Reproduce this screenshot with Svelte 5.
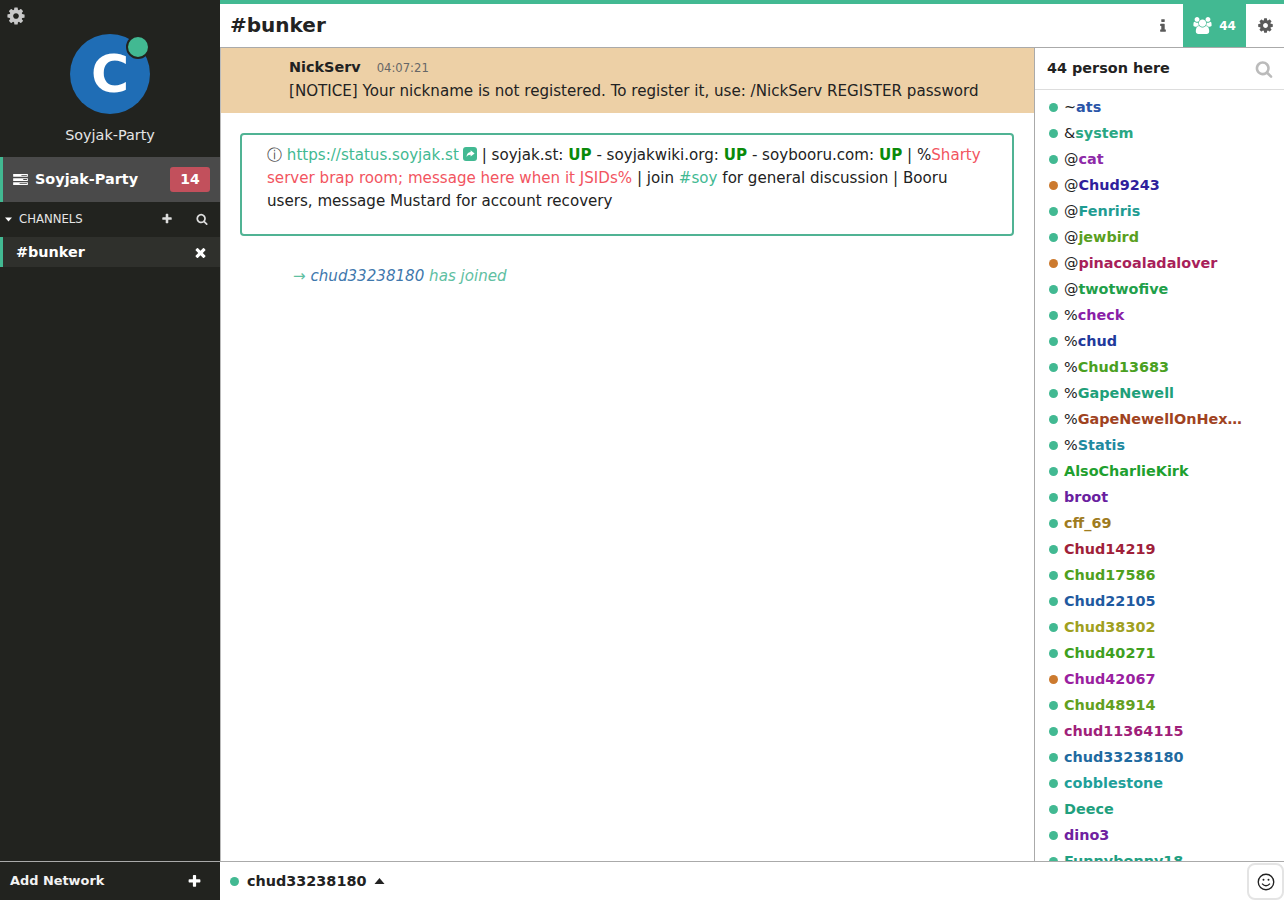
<script>
	const cog = 'M1152 896q0-106-75-181t-181-75-181 75-75 181 75 181 181 75 181-75 75-181zm512-109v222q0 12-8 23t-20 13l-185 28q-19 54-39 91 35 50 107 138 10 12 10 25t-9 23q-27 37-99 108t-94 71q-12 0-26-9l-138-108q-44 23-91 38-16 136-29 186-7 28-36 28h-222q-14 0-24.5-8.5t-11.5-21.5l-28-184q-49-16-90-37l-141 107q-10 9-25 9-14 0-25-11-126-114-165-168-7-10-7-23 0-12 8-23 15-21 51-66.5t54-70.5q-27-50-41-99l-183-27q-13-2-21-12.5t-8-23.5v-222q0-12 8-23t19-13l186-28q14-46 39-92-40-57-107-138-10-12-10-24 0-10 9-23 26-36 98.5-107.5t94.5-71.5q13 0 26 10l138 107q44-23 91-38 16-136 29-186 7-28 36-28h222q14 0 24.5 8.5t11.5 21.5l28 184q49 16 90 37l142-107q9-9 24-9 13 0 25 10 129 119 165 170 7 8 7 22 0 12-8 23-15 21-51 66.5t-54 70.5q26 50 41 98l183 28q13 2 21 12.5t8 23.5z';
	const plus = 'M1600 736v192q0 40-28 68t-68 28h-416v416q0 40-28 68t-68 28h-192q-40 0-68-28t-28-68v-416h-416q-40 0-68-28t-28-68v-192q0-40 28-68t68-28h416v-416q0-40 28-68t68-28h192q40 0 68 28t28 68v416h416q40 0 68 28t28 68z';
	const close = 'M1490 1322q0 40-28 68l-136 136q-28 28-68 28t-68-28l-294-294-294 294q-28 28-68 28t-68-28l-136-136q-28-28-28-68t28-68l294-294-294-294q-28-28-28-68t28-68l136-136q28-28 68-28t68 28l294 294 294-294q28-28 68-28t68 28l136 136q28 28 28 68t-28 68l-294 294 294 294q28 28 28 68z';
	const search = 'M1216 832q0-185-131.5-316.5t-316.5-131.5-316.5 131.5-131.5 316.5 131.5 316.5 316.5 131.5 316.5-131.5 131.5-316.5zm512 832q0 52-38 90t-90 38q-54 0-90-38l-343-342q-179 124-399 124-143 0-273.5-55.5t-225-150-150-225-55.5-273.5 55.5-273.5 150-225 225-150 273.5-55.5 273.5 55.5 225 150 150 225 55.5 273.5q0 220-124 399l343 343q37 37 37 90z';
	const users = 'M593 896q-162 5-265 128h-134q-82 0-138-40.5t-56-118.5q0-353 124-353 6 0 43.5 21t97.5 42.5 119 21.5q67 0 133-23-5 37-5 66 0 139 81 256zm1071 637q0 120-73 189.5t-194 69.5h-874q-121 0-194-69.5t-73-189.5q0-53 3.5-103.5t14-109 26.5-108.5 43-97.5 62-81 85.5-53.5 111.5-20q10 0 43 21.5t73 48 107 48 135 21.5 135-21.5 107-48 73-48 43-21.5q61 0 111.5 20t85.5 53.5 62 81 43 97.5 26.5 108.5 14 109 3.5 103.5zm-1024-1277q0 106-75 181t-181 75-181-75-75-181 75-181 181-75 181 75 75 181zm704 384q0 159-112.5 271.5t-271.5 112.5-271.5-112.5-112.5-271.5 112.5-271.5 271.5-112.5 271.5 112.5 112.5 271.5zm576 225q0 78-56 118.5t-138 40.5h-134q-103-123-265-128 81-117 81-256 0-29-5-66 66 23 133 23 59 0 119-21.5t97.5-42.5 43.5-21q124 0 124 353zm-128-609q0 106-75 181t-181 75-181-75-75-181 75-181 181-75 181 75 75 181z';
	const info = 'M1216 1344v128q0 26-19 45t-45 19h-512q-26 0-45-19t-19-45v-128q0-26 19-45t45-19h64v-384h-64q-26 0-45-19t-19-45v-128q0-26 19-45t45-19h384q26 0 45 19t19 45v576h64q26 0 45 19t19 45zm-128-1152v192q0 26-19 45t-45 19h-256q-26 0-45-19t-19-45v-192q0-26 19-45t45-19h256q26 0 45 19t19 45z';

	const people = [
		['~', 'ats', '#2a55a8'], ['&', 'system', '#2aa784'], ['@', 'cat', '#8e2aa8'],
		['@', 'Chud9243', '#2f1f9c', 1], ['@', 'Fenriris', '#1f9c92'], ['@', 'jewbird', '#5aa01f'],
		['@', 'pinacoaladalover', '#a81f5a', 1], ['@', 'twotwofive', '#1fa04a'], ['%', 'check', '#8a1fa8'],
		['%', 'chud', '#1f3a9c'], ['%', 'Chud13683', '#4aa01f'], ['%', 'GapeNewell', '#1fa07a'],
		['%', 'GapeNewellOnHex…', '#a0431f'], ['%', 'Statis', '#1f8aa0'], ['', 'AlsoCharlieKirk', '#1fa02f'],
		['', 'broot', '#6a1fa0'], ['', 'cff_69', '#a07c1f'], ['', 'Chud14219', '#a01f3a'],
		['', 'Chud17586', '#4fa01f'], ['', 'Chud22105', '#1f5aa0'], ['', 'Chud38302', '#a0a01f'],
		['', 'Chud40271', '#3fa01f'], ['', 'Chud42067', '#9a1fa0', 1], ['', 'Chud48914', '#62a01f'],
		['', 'chud11364115', '#a01f7a'], ['', 'chud33238180', '#1f6aa0'], ['', 'cobblestone', '#1fa09a'],
		['', 'Deece', '#1fa07e'], ['', 'dino3', '#6f1fa0'], ['', 'Funnybonny18', '#1fa082']
	];
</script>

<div class="app">
	<aside class="side">
		<div class="me">
			<svg class="me-cog" viewBox="0 0 1792 1792"><path d={cog} /></svg>
			<div class="avatar">C<span class="avatar-dot"></span></div>
			<div class="me-name">Soyjak-Party</div>
		</div>
		<div class="net">
			<svg class="net-icon" viewBox="0 0 16 12">
				<path d="M0 0h16v3H0zM0 4.5h16v3H0zM0 9h16v3H0z" />
				<path class="net-notch" d="M9 1h6v1H9zM11 5.5h4v1h-4zM7 10h8v1H7z" />
			</svg>
			<span class="net-name">Soyjak-Party</span>
			<span class="badge">14</span>
		</div>
		<div class="chan-head">
			<svg class="caret" viewBox="0 0 10 6"><path d="M0 0h10L5 6z" /></svg>
			<span class="chan-label">CHANNELS</span>
			<svg class="ch-plus" viewBox="0 0 1792 1792"><path d={plus} /></svg>
			<svg class="ch-search" viewBox="0 0 1792 1792"><path d={search} /></svg>
		</div>
		<div class="chan">
			<span>#bunker</span>
			<svg class="chan-x" viewBox="0 0 1792 1792"><path d={close} /></svg>
		</div>
		<div class="side-fill"></div>
		<div class="add">
			<span>Add Network</span>
			<svg class="add-plus" viewBox="0 0 1792 1792"><path d={plus} /></svg>
		</div>
	</aside>

	<main class="main">
		<header class="head">
			<h1>#bunker</h1>
			<div class="head-btn info"><svg viewBox="0 0 1792 1792"><path d={info} /></svg></div>
			<div class="head-btn count">
				<svg viewBox="0 0 1920 1792"><path d={users} /></svg>
				<span>44</span>
			</div>
			<div class="head-btn cfg"><svg viewBox="0 0 1792 1792"><path d={cog} /></svg></div>
		</header>

		<div class="body">
			<section class="log">
				<div class="notice">
					<div class="notice-top"><b>NickServ</b><span class="time">04:07:21</span></div>
					<div>[NOTICE] Your nickname is not registered. To register it, use: /NickServ REGISTER password</div>
				</div>
				<div class="topic">
					<span class="i">ⓘ</span> <span class="link">https://status.soyjak.st</span><svg class="ext" viewBox="0 0 14 14"><rect width="14" height="14" rx="3" /><path d="M7.6 3.2 11.6 6.4 7.6 9.6V7.7C5.7 7.6 4.5 8.3 3.6 10 3.6 7 5 5.3 7.6 5.1z" fill="#fff" /></svg> | soyjak.st: <b class="up">UP</b> - soyjakwiki.org: <b class="up">UP</b> - soybooru.com: <b class="up">UP</b> | %<span class="red">Sharty server brap room; message here when it JSIDs%</span> | join <span class="link">#soy</span> for general discussion | Booru users, message Mustard for account recovery
				</div>
				<div class="join"><span class="arrow">→</span> <span class="join-nick">chud33238180</span> has joined</div>
			</section>

			<section class="people">
				<div class="people-head">
					<span>44 person here</span>
					<svg viewBox="0 0 1792 1792"><path d={search} /></svg>
				</div>
				<ul>
					{#each people as p}
						<li>
							<span class="dot" class:away={p[3]}></span>
							<span class="prefix">{p[0]}</span><b style="color:{p[2]}">{p[1]}</b>
						</li>
					{/each}
				</ul>
			</section>
		</div>

		<footer class="input">
			<span class="dot"></span>
			<b class="own">chud33238180</b>
			<svg class="own-caret" viewBox="0 0 10 6"><path d="M5 0l5 6H0z" /></svg>
			<div class="smile">
				<svg viewBox="0 0 20 20" fill="none" stroke="#222" stroke-width="1.5">
					<circle cx="10" cy="10" r="8.6" />
					<path d="M5.6 11.8q4.4 4.8 8.8 0" />
					<circle cx="7.2" cy="7.4" r="1.1" fill="#222" stroke="none" />
					<circle cx="12.8" cy="7.4" r="1.1" fill="#222" stroke="none" />
				</svg>
			</div>
		</footer>
	</main>
</div>

<style>
	:global(body) {
		margin: 0;
		font-family: "DejaVu Sans", sans-serif;
		color: #222;
	}

	.app {
		display: flex;
		height: 900px;
		overflow: hidden;
	}

	.side {
		width: 220px;
		flex: none;
		display: flex;
		flex-direction: column;
		background: #22231f;
		color: #fff;
	}

	.me {
		position: relative;
		height: 157px;
		display: flex;
		flex-direction: column;
		align-items: center;
		padding-top: 34px;
		box-sizing: border-box;
	}

	.me-cog {
		position: absolute;
		left: 6px;
		top: 6px;
		width: 20px;
		height: 20px;
		fill: #c8c8c8;
	}

	.avatar {
		position: relative;
		width: 80px;
		height: 80px;
		border-radius: 50%;
		background: #1f6db5;
		color: #fff;
		font: bold 52px/80px "DejaVu Sans", sans-serif;
		text-align: center;
	}

	.avatar-dot {
		position: absolute;
		right: 0;
		top: 1px;
		width: 20px;
		height: 20px;
		border-radius: 50%;
		background: #42b992;
		border: 2px solid #22231f;
	}

	.me-name {
		margin-top: 13px;
		font-size: 14.4px;
		line-height: 17px;
		color: #e6e6e6;
	}

	.net {
		height: 45px;
		display: flex;
		align-items: center;
		background: #4a4a4a;
		border-left: 3px solid #42b992;
		padding: 0 10px;
		box-sizing: border-box;
	}

	.net-icon {
		width: 15px;
		height: 11px;
		margin-right: 7px;
		fill: #fff;
	}

	.net-notch {
		fill: #4a4a4a;
	}

	.net-name {
		flex: 1;
		font-weight: bold;
		font-size: 14.4px;
		margin-top: -1px;
	}

	.badge {
		width: 40px;
		height: 25px;
		line-height: 25px;
		border-radius: 3px;
		background: #c2505c;
		text-align: center;
		font-weight: bold;
		font-size: 14px;
	}

	.chan-head {
		height: 35px;
		display: flex;
		align-items: center;
		position: relative;
		padding-left: 5px;
		font-size: 11.7px;
	}

	.caret {
		width: 7px;
		height: 5px;
		fill: #fff;
		margin-right: 7px;
	}

	.chan-label {
		flex: 1;
		color: #e6e6e6;
		margin-top: -1px;
	}

	.ch-plus {
		width: 12px;
		height: 12px;
		fill: #ddd;
		margin-right: 23px;
		margin-top: -1px;
	}

	.ch-search {
		width: 12px;
		height: 12px;
		fill: #ddd;
		margin-right: 12px;
		margin-top: -1px;
	}

	.chan {
		height: 30px;
		display: flex;
		align-items: center;
		justify-content: space-between;
		background: #2f302c;
		border-left: 3px solid #42b992;
		padding: 0 13px;
		box-sizing: border-box;
		font-weight: bold;
		font-size: 14.4px;
	}

	.chan-x {
		width: 15px;
		height: 15px;
		fill: #fff;
		margin-right: -1px;
	}

	.side-fill {
		flex: 1;
	}

	.add {
		height: 39px;
		border-top: 1px solid #aaa;
		display: flex;
		align-items: center;
		justify-content: space-between;
		padding: 0 18px 0 10px;
		font-weight: bold;
		font-size: 12.9px;
		box-sizing: border-box;
		color: #f2f2f2;
	}

	.add span {
		margin-top: -1px;
	}

	.add-plus {
		width: 15px;
		height: 15px;
		fill: #fff;
	}

	.main {
		flex: 1;
		min-width: 0;
		display: flex;
		flex-direction: column;
	}

	.head {
		height: 48px;
		flex: none;
		box-sizing: border-box;
		border-top: 4px solid #42b992;
		border-bottom: 1px solid #aaa;
		display: flex;
		align-items: stretch;
	}

	.head h1 {
		flex: 1;
		margin: 0;
		padding-left: 10px;
		font-size: 20px;
		line-height: 43px;
		font-weight: bold;
		color: #222;
	}

	.head-btn {
		display: flex;
		align-items: center;
		justify-content: center;
	}

	.head-btn svg {
		fill: #5a5a5a;
	}

	.info {
		width: 38px;
		padding-right: 2px;
		box-sizing: border-box;
	}

	.info svg {
		width: 16px;
		height: 16px;
	}

	.count {
		width: 63px;
		background: #42b992;
		color: #fff;
		font-weight: bold;
		font-size: 12px;
		gap: 7px;
	}

	.count svg {
		width: 19px;
		height: 17px;
		fill: #fff;
	}

	.cfg {
		width: 38px;
	}

	.cfg svg {
		width: 17px;
		height: 17px;
	}

	.body {
		flex: 1;
		min-height: 0;
		display: flex;
	}

	.log {
		flex: 1;
		min-width: 0;
		font-size: 15.1px;
		line-height: 23px;
		border-left: 1px solid #bbb;
	}

	.notice {
		height: 65px;
		box-sizing: border-box;
		background: #edd0a6;
		padding: 8px 0 0 68px;
	}

	.notice-top {
		font-size: 14.4px;
	}

	.time {
		margin-left: 16px;
		font-size: 11.6px;
		color: #666;
	}

	.topic {
		margin: 20px 20px 0 19px;
		height: 103px;
		box-sizing: border-box;
		border: 2px solid #50b394;
		border-radius: 4px;
		padding: 9px 25px;
	}

	.i {
		color: #555;
	}

	.link {
		color: #42b992;
	}

	.ext {
		width: 14px;
		height: 14px;
		fill: #42b992;
		margin-left: 4px;
		vertical-align: -1px;
	}

	.up {
		color: #0a8a0a;
	}

	.red {
		color: #f2555f;
	}

	.join {
		margin: 29px 0 0 72px;
		font-style: italic;
		color: #5fc0a2;
	}

	.join-nick {
		color: #3f78ad;
	}

	.people {
		width: 250px;
		flex: none;
		box-sizing: border-box;
		border-left: 1px solid #aaa;
		overflow: hidden;
	}

	.people-head {
		height: 42px;
		box-sizing: border-box;
		border-bottom: 1px solid #ddd;
		display: flex;
		align-items: center;
		justify-content: space-between;
		padding: 0 11px 2px 12px;
		font-weight: bold;
		font-size: 14.4px;
	}

	.people-head svg {
		width: 18px;
		height: 18px;
		fill: #bbb;
		margin-top: 2px;
	}

	ul {
		margin: 0;
		padding: 4px 0 0 14px;
		list-style: none;
	}

	li {
		height: 26px;
		display: flex;
		align-items: center;
		font-size: 14.4px;
		white-space: pre;
	}

	li b {
		font-weight: bold;
	}

	.dot {
		width: 9px;
		height: 9px;
		border-radius: 50%;
		background: #42b992;
		flex: none;
		margin-right: 6px;
	}

	.dot.away {
		background: #cc7a2e;
	}

	.input {
		height: 39px;
		flex: none;
		box-sizing: border-box;
		border-top: 1px solid #aaa;
		display: flex;
		align-items: center;
		padding-left: 10px;
		position: relative;
	}

	.input .dot {
		margin-right: 8px;
	}

	.own {
		font-size: 14.4px;
	}

	.own-caret {
		width: 11px;
		height: 6px;
		margin-left: 8px;
		fill: #222;
	}

	.smile {
		position: absolute;
		right: 0;
		top: 1px;
		width: 37px;
		height: 37px;
		border: 2px solid #e4e4e4;
		border-radius: 8px;
		display: flex;
		align-items: center;
		justify-content: center;
		box-sizing: border-box;
		background: #fff;
	}

	.smile svg {
		width: 18px;
		height: 18px;
	}
</style>
